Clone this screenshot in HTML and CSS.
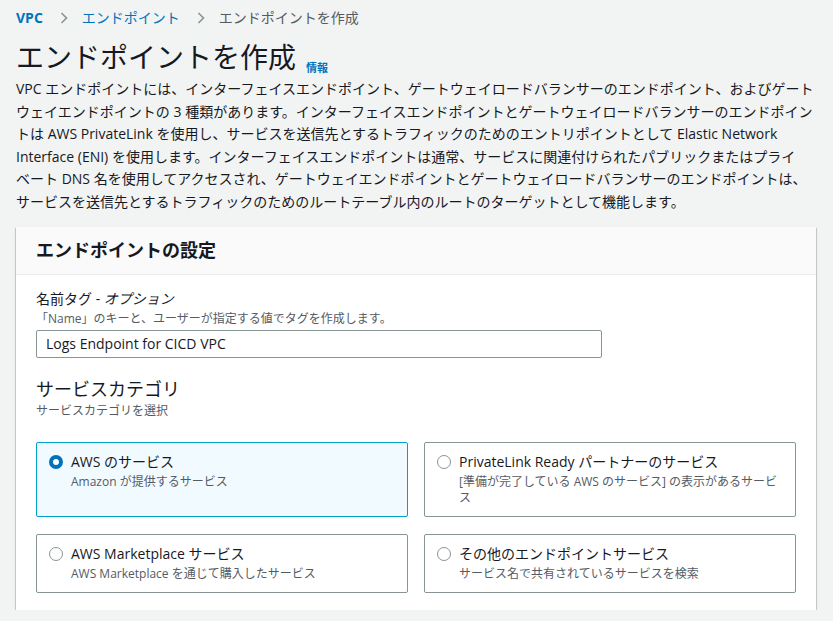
FILE: index.html
```html
<!DOCTYPE html>
<html lang="ja">
<head>
<meta charset="utf-8">
<link rel="stylesheet" href="styles.css">
</head>
<body>
<div class="page">
  <nav class="crumbs">
    <a class="crumb-link strong">VPC</a>
    <svg class="chev" viewBox="0 0 8 12" width="8" height="12"><path d="M1.5 1l5 5-5 5" fill="none" stroke="#879596" stroke-width="1.6"/></svg>
    <a class="crumb-link">エンドポイント</a>
    <svg class="chev" viewBox="0 0 8 12" width="8" height="12"><path d="M1.5 1l5 5-5 5" fill="none" stroke="#879596" stroke-width="1.6"/></svg>
    <span class="crumb-current">エンドポイントを作成</span>
  </nav>
  <div class="title-row">
    <h1 class="title">エンドポイントを作成</h1>
    <a class="info">情報</a>
  </div>
  <p class="desc">VPC エンドポイントには、インターフェイスエンドポイント、ゲートウェイロードバランサーのエンドポイント、およびゲートウェイエンドポイントの 3 種類があります。インターフェイスエンドポイントとゲートウェイロードバランサーのエンドポイントは AWS PrivateLink を使用し、サービスを送信先とするトラフィックのためのエントリポイントとして Elastic Network Interface (ENI) を使用します。インターフェイスエンドポイントは通常、サービスに関連付けられたパブリックまたはプライベート DNS 名を使用してアクセスされ、ゲートウェイエンドポイントとゲートウェイロードバランサーのエンドポイントは、サービスを送信先とするトラフィックのためのルートテーブル内のルートのターゲットとして機能します。</p>

  <section class="card">
    <header class="card-head">エンドポイントの設定</header>
    <div class="card-body">
      <div class="field">
        <div class="label">名前タグ - <i>オプション</i></div>
        <div class="hint">「Name」のキーと、ユーザーが指定する値でタグを作成します。</div>
        <div class="input">Logs Endpoint for CICD VPC</div>
      </div>
      <div class="section-title">サービスカテゴリ</div>
      <div class="hint">サービスカテゴリを選択</div>
      <div class="tiles">
        <div class="tile selected">
          <span class="radio on"></span>
          <div class="tile-text">
            <div class="tile-title">AWS のサービス</div>
            <div class="tile-sub">Amazon が提供するサービス</div>
          </div>
        </div>
        <div class="tile">
          <span class="radio"></span>
          <div class="tile-text">
            <div class="tile-title">PrivateLink Ready パートナーのサービス</div>
            <div class="tile-sub">[準備が完了している AWS のサービス] の表示があるサービス</div>
          </div>
        </div>
        <div class="tile">
          <span class="radio"></span>
          <div class="tile-text">
            <div class="tile-title">AWS Marketplace サービス</div>
            <div class="tile-sub">AWS Marketplace を通じて購入したサービス</div>
          </div>
        </div>
        <div class="tile">
          <span class="radio"></span>
          <div class="tile-text">
            <div class="tile-title">その他のエンドポイントサービス</div>
            <div class="tile-sub">サービス名で共有されているサービスを検索</div>
          </div>
        </div>
      </div>
    </div>
  </section>
</div>
</body>
</html>
```

FILE: styles.css
```css
* { box-sizing: border-box; }
html, body { margin: 0; padding: 0; }
body {
  background: #f2f3f3;
  color: #16191f;
  font-family: "Open Sans", "Noto Sans CJK JP", sans-serif;
  font-size: 14px;
  line-height: 20px;
  line-break: strict;
}
.page { padding: 8px 16px 0 16px; width: 833px; }
.crumbs { display: flex; align-items: center; height: 20px; }
.crumb-link { color: #0073bb; font-weight: 400; }
.crumb-link.strong { font-weight: 700; }
.chev { margin: 0 14px 0 17px; }
.crumb-current { color: #545b64; }
.title-row { display: flex; margin-top: 11px; height: 36px; }
.title { font-size: 28px; line-height: 36px; font-weight: 400; margin: 0; }
.info { color: #0073bb; font-size: 11px; font-weight: 700; margin-left: 10px; align-self: flex-end; line-height: 14px; }
.desc { margin: 3px 0 0 0; line-height: 22.6px; width: 801px; }
.card {
  margin-top: 13px;
  width: 800px;
  background: #fff;
  box-shadow: 0 1px 1px 0 rgba(0,28,36,.3), 1px 1px 1px 0 rgba(0,28,36,.15), -1px 1px 1px 0 rgba(0,28,36,.15);
}
.card-head {
  background: #fafafa;
  border-bottom: 1px solid #eaeded;
  height: 48px;
  padding: 0 20px;
  display: flex; align-items: center;
  font-size: 18px; font-weight: 700;
}
.card-body { padding: 14px 20px 17px 20px; }
.label { font-size: 14px; line-height: 20px; }
.label i { font-style: italic; }
.hint { font-size: 12px; line-height: 16px; color: #545b64; margin-top: 2px; }
.input {
  margin-top: 3px;
  width: 566px; height: 28px;
  border: 1px solid #879596; border-radius: 2px;
  padding: 0 9px;
  display: flex; align-items: center;
}
.section-title { font-size: 18px; line-height: 24px; margin-top: 19px; }
.tiles {
  margin-top: 23px;
  display: grid;
  grid-template-columns: 1fr 1fr;
  column-gap: 16px; row-gap: 17px;
}
.tile {
  display: flex; align-items: flex-start;
  border: 1px solid #879596; border-radius: 2px;
  padding: 9px 12px 10px 12px;
  min-height: 59px;
}
.tile.selected { background: #f1faff; border-color: #00a1c9; }
.radio {
  flex: none;
  width: 14px; height: 14px; border-radius: 50%;
  border: 1.5px solid #879596; background: #fff;
  margin-top: 3px; margin-right: 8px;
}
.radio.on { border: 4px solid #0073bb; }
.tile-title { font-size: 14px; line-height: 20px; }
.tile-sub { font-size: 12px; line-height: 16px; color: #545b64; margin-top: 2px; }
```
